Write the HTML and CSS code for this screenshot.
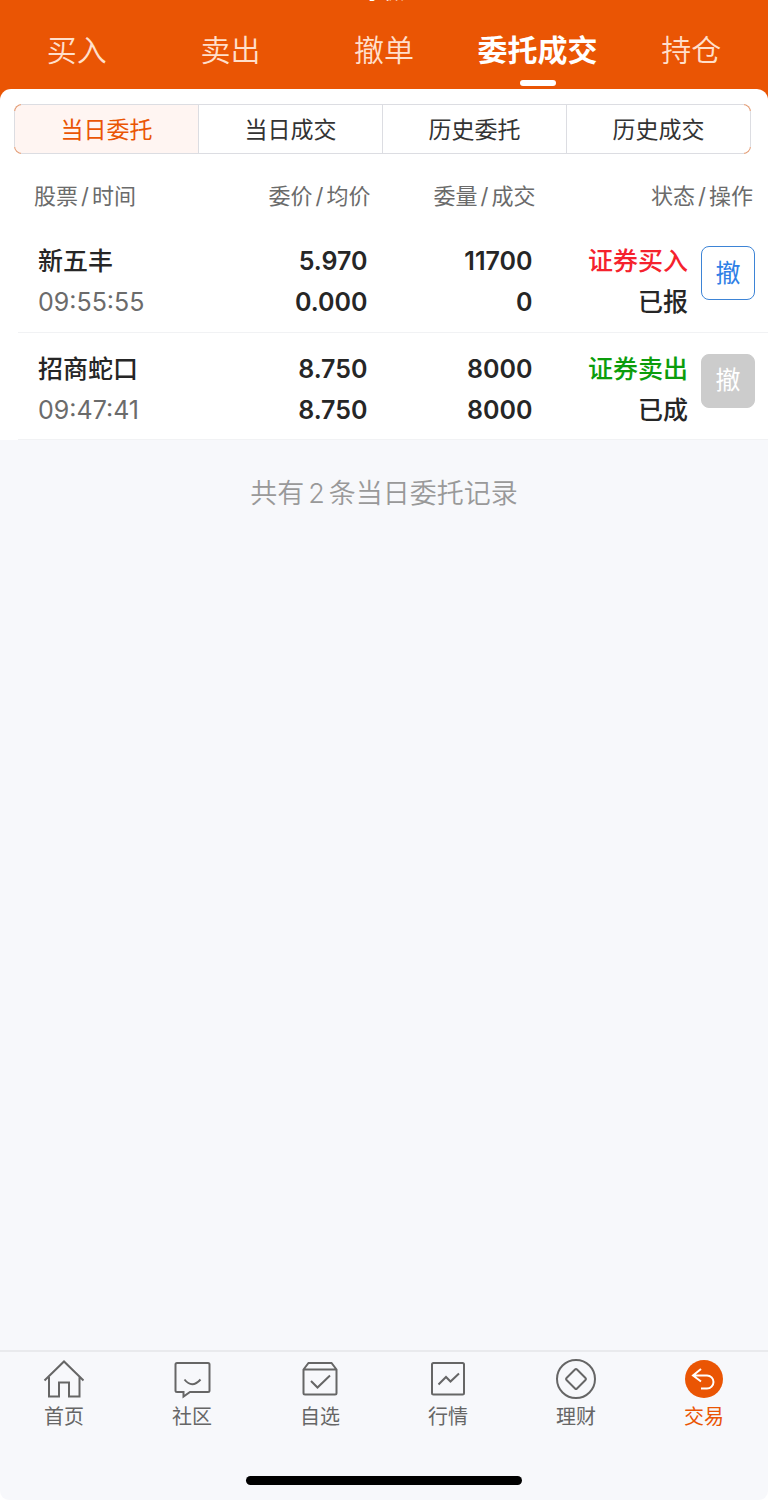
FILE: index.html
```html
<!DOCTYPE html>
<html lang="zh-CN">
<head>
<meta charset="utf-8">
<meta name="viewport" content="width=device-width, initial-scale=1">
<title>委托成交</title>
<link rel="stylesheet" href="styles.css">
</head>
<body>
<div class="app">
  <header class="top">
    <div class="account"><span class="account-name">小微</span></div>
    <nav class="tabs">
      <a class="tab" href="#">买入</a>
      <a class="tab" href="#">卖出</a>
      <a class="tab" href="#">撤单</a>
      <a class="tab tab-active" href="#" aria-current="page">委托成交</a>
      <a class="tab" href="#">持仓</a>
    </nav>
  </header>
  <main class="content">
    <section class="sheet">
      <div class="segments">
        <button class="segment segment-active" type="button">当日委托</button>
        <button class="segment" type="button">当日成交</button>
        <button class="segment" type="button">历史委托</button>
        <button class="segment" type="button">历史成交</button>
      </div>
      <table class="orders">
        <colgroup>
          <col class="col-stock"><col class="col-price"><col class="col-amount"><col class="col-state"><col class="col-action">
        </colgroup>
        <thead>
          <tr><th>股票<i>/</i>时间</th><th>委价<i>/</i>均价</th><th>委量<i>/</i>成交</th><th colspan="2">状态<i>/</i>操作</th></tr>
        </thead>
        <tbody>
          <tr>
            <td><div class="name">新五丰</div><div class="time">09:55:55</div></td>
            <td><div>5.970</div><div>0.000</div></td>
            <td><div>11700</div><div>0</div></td>
            <td class="state"><div class="buy">证券买入</div><div>已报</div></td>
            <td><button class="cancel" type="button">撤</button></td>
          </tr>
          <tr>
            <td><div class="name">招商蛇口</div><div class="time">09:47:41</div></td>
            <td><div>8.750</div><div>8.750</div></td>
            <td><div>8000</div><div>8000</div></td>
            <td class="state"><div class="sell">证券卖出</div><div>已成</div></td>
            <td><button class="cancel" type="button" disabled>撤</button></td>
          </tr>
        </tbody>
      </table>
    </section>
    <p class="summary">共有<span class="count">2</span>条当日委托记录</p>
  </main>
  <footer class="bottom">
    <nav class="menu">
      <a class="item" href="#">
        <svg class="icon" viewBox="0 0 42 42"><path d="M1.500 21.500 21 2.500l19.500 19M6 18v19.500h10V23.500h10v14h10.500V18"/></svg>
        <span>首页</span>
      </a>
      <a class="item" href="#">
        <svg class="icon" viewBox="0 0 42 42"><path d="M6 4h31q1.500 0 1.500 1.500v26q0 1.500-1.500 1.500H19l-6.500 4.500V33H6q-1.500 0-1.500-1.500v-26Q4.500 4 6 4Z"/><path d="M13.500 20.500q7.500 9.500 16 0"/></svg>
        <span>社区</span>
      </a>
      <a class="item" href="#">
        <svg class="icon" viewBox="0 0 42 42"><path d="M4.500 10.500 9.500 4h23l5 6.500V34q0 1.500-1.500 1.500H6q-1.500 0-1.500-1.500ZM4.500 10.500h33M12 22l6.500 6.500L31 16.500"/></svg>
        <span>自选</span>
      </a>
      <a class="item" href="#">
        <svg class="icon" viewBox="0 0 42 42"><rect x="5" y="4" width="32" height="31.500" rx="1.500"/><path d="m11.500 25.500 7.500-7.500 4.500 4.500 8.500-8"/></svg>
        <span>行情</span>
      </a>
      <a class="item" href="#">
        <svg class="icon" viewBox="0 0 42 42"><circle cx="21" cy="20" r="19"/><path d="m20 10.500q1-1 2 0l8.500 8.500q1 1 0 2L22 29.500q-1 1-2 0L11.500 21q-1-1 0-2Z"/></svg>
        <span>理财</span>
      </a>
      <a class="item item-active" href="#" aria-current="page">
        <svg class="icon" viewBox="0 0 42 42"><circle class="disc" cx="21" cy="20" r="19"/><path class="arrow" d="m18 10-8 6.500 8 6M10.500 16.500H24a6.500 6.500 0 0 1 0 13h-6"/></svg>
        <span>交易</span>
      </a>
    </nav>
    <div class="home-bar"></div>
  </footer>
</div>
</body>
</html>
```
FILE: styles.css
```css
* { box-sizing: border-box; }

body {
  margin: 0;
  background: #fff;
  font-family: Inter, "Noto Sans CJK SC", sans-serif;
  color: #262626;
}

a { color: inherit; text-decoration: none; }

button { font: inherit; margin: 0; padding: 0; cursor: pointer; }

.app {
  display: flex;
  flex-direction: column;
  min-height: 100vh;
  background: linear-gradient(#ea5504 120px, #f7f8fb 120px);
  border-radius: 0 0 9px 9px;
  overflow: hidden;
}

.top { color: #fff; }

.account {
  display: flex;
  flex-direction: column;
  justify-content: flex-end;
  align-items: center;
  height: 2px;
  overflow: hidden;
  font-size: 20px;
  line-height: 20px;
  font-weight: 500;
}

.account-name { flex: none; }

.tabs { display: flex; height: 87px; }

.tab {
  position: relative;
  flex: 1;
  padding-top: 24px;
  text-align: center;
  white-space: nowrap;
  font-size: 30px;
  line-height: 48px;
  font-weight: 350;
  color: #ffdfcb;
}

.tab-active { font-weight: 700; color: #fff; }

.tab-active::after {
  content: "";
  position: absolute;
  left: 50%;
  bottom: 3px;
  width: 36px;
  height: 6px;
  margin-left: -18px;
  border-radius: 3px;
  background: #fff;
}

.content { flex: 1; }

.sheet {
  padding-top: 15px;
  background: #fff;
  border-radius: 11px 11px 0 0;
}

/* Grey frame whose rounded corners show the accent colour. */
.segments {
  display: flex;
  height: 50px;
  margin: 0 17px 0 14px;
  border: 1px solid transparent;
  border-radius: 8px;
  background:
    linear-gradient(#dcdde2, #dcdde2) center / calc(100% - 14px) 100% no-repeat border-box,
    linear-gradient(#dcdde2, #dcdde2) center / 100% calc(100% - 14px) no-repeat border-box,
    linear-gradient(#e39a72, #e39a72) border-box;
  overflow: hidden;
}

.segment {
  flex: 1;
  padding-bottom: 2px;
  border: 0;
  border-left: 1px solid #dcdde2;
  background: #fff;
  color: #333;
  font-size: 23px;
}

.segment:first-child { border-left: 0; }

.segment-active { background: #fff5f2; color: #ea5504; }

.orders {
  width: calc(100% - 18px);
  margin-left: 18px;
  table-layout: fixed;
  border-collapse: collapse;
}

.col-stock { width: 20%; }
.col-price { width: 27%; }
.col-amount { width: 22%; }
.col-state { width: 21%; }
.col-action { width: 10%; }

.orders th {
  height: 71px;
  padding: 8px 0 0 16px;
  text-align: right;
  white-space: nowrap;
  font-size: 22px;
  font-weight: 400;
  color: #6b6b6b;
}

.orders th i { margin: 0 3px; font-style: normal; }

.orders th:first-child { text-align: left; }
.orders th:last-child { padding-right: 15px; }

.orders td {
  height: 107px;
  padding: 8px 3px 0 0;
  border-bottom: 1px solid #f1f2f4;
  text-align: right;
  white-space: nowrap;
  font-size: 25px;
  line-height: 41px;
  font-weight: 600;
}

.orders td:first-child { padding-left: 20px; text-align: left; }

.orders td:last-child { padding: 21px 13px 0 0; vertical-align: top; }

.orders .state { padding-right: 5px; font-weight: 500; }
.orders .name { font-weight: 500; }
.orders .time { color: #6b6b6b; font-weight: 400; }

.buy { color: #f5222d; }
.sell { color: #0c9d0c; }

.cancel {
  display: block;
  width: 54px;
  height: 54px;
  margin-left: auto;
  border: 1px solid #3d84d6;
  border-radius: 8px;
  background: #fff;
  color: #2f7fe6;
  font-size: 25px;
  font-weight: 400;
}

.cancel:disabled { border-color: #ccc; background: #ccc; color: #fff; }

.summary {
  margin: 34px 0;
  text-align: center;
  font-size: 27px;
  line-height: 40px;
  font-weight: 350;
  color: #999;
}

.count { margin: 0 4px; }

.bottom {
  display: flex;
  flex-direction: column;
  align-items: center;
  border-top: 2px solid #e9eaed;
}

.menu { display: flex; width: 100%; height: 124px; padding-top: 7px; }

.item {
  flex: 1;
  display: flex;
  flex-direction: column;
  align-items: center;
  gap: 1px;
  color: #666;
  font-size: 20px;
  line-height: 30px;
}

.item-active { color: #ea5504; }

.icon {
  width: 42px;
  height: 42px;
  fill: none;
  stroke: #666;
  stroke-width: 2;
}

.icon .disc { fill: #ea5504; stroke: none; }
.icon .arrow { stroke: #fff; }

.home-bar {
  width: 36%;
  height: 9px;
  margin-bottom: 15px;
  border-radius: 5px;
  background: #000;
}
```
